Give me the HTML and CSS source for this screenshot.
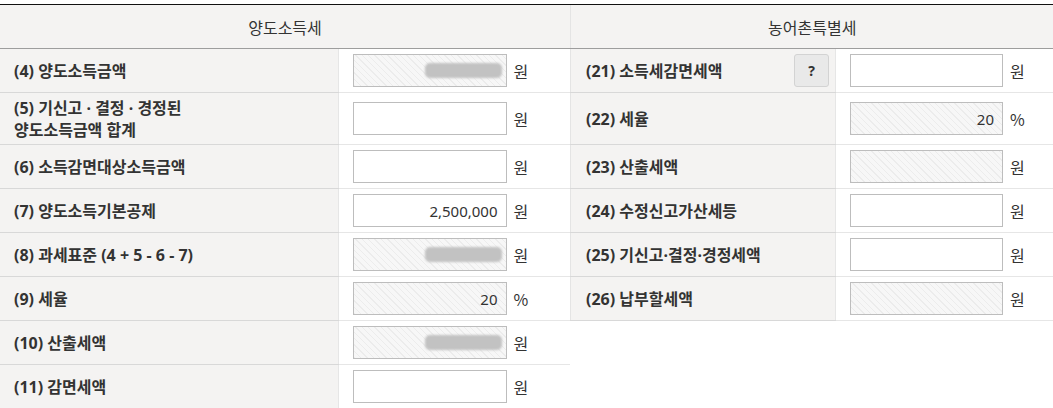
FILE: index.html
```html
<!DOCTYPE html>
<html lang="ko">
<head>
<meta charset="utf-8">
<title>양도소득세 / 농어촌특별세</title>
<link rel="stylesheet" href="styles.css">
</head>
<body>
<div class="sheet">
  <table class="tax tax-left">
    <colgroup><col class="c-label-l"><col class="c-input-l"></colgroup>
    <thead><tr><th colspan="2" class="head">양도소득세</th></tr></thead>
    <tbody>
      <tr><th class="lbl">(4) 양도소득금액</th><td class="inp"><div class="cell"><div class="field ro"><span class="mask"></span></div><span class="unit">원</span></div></td></tr>
      <tr class="tall"><th class="lbl">(5) 기신고 · 결정 · 경정된<br>양도소득금액 합계</th><td class="inp"><div class="cell"><div class="field"></div><span class="unit">원</span></div></td></tr>
      <tr><th class="lbl">(6) 소득감면대상소득금액</th><td class="inp"><div class="cell"><div class="field"></div><span class="unit">원</span></div></td></tr>
      <tr><th class="lbl">(7) 양도소득기본공제</th><td class="inp"><div class="cell"><div class="field">2,500,000</div><span class="unit">원</span></div></td></tr>
      <tr><th class="lbl">(8) 과세표준 (4 + 5 - 6 - 7)</th><td class="inp"><div class="cell"><div class="field ro"><span class="mask"></span></div><span class="unit">원</span></div></td></tr>
      <tr><th class="lbl">(9) 세율</th><td class="inp"><div class="cell"><div class="field ro">20</div><span class="unit">%</span></div></td></tr>
      <tr><th class="lbl">(10) 산출세액</th><td class="inp"><div class="cell"><div class="field ro"><span class="mask"></span></div><span class="unit">원</span></div></td></tr>
      <tr><th class="lbl">(11) 감면세액</th><td class="inp"><div class="cell"><div class="field"></div><span class="unit">원</span></div></td></tr>
    </tbody>
  </table>
  <table class="tax tax-right">
    <colgroup><col class="c-label-r"><col class="c-input-r"></colgroup>
    <thead><tr><th colspan="2" class="head">농어촌특별세</th></tr></thead>
    <tbody>
      <tr><th class="lbl lbl-btn"><div class="lbl-row"><span>(21) 소득세감면세액</span><span class="help">?</span></div></th><td class="inp"><div class="cell"><div class="field"></div><span class="unit">원</span></div></td></tr>
      <tr class="tall"><th class="lbl">(22) 세율</th><td class="inp"><div class="cell"><div class="field ro">20</div><span class="unit">%</span></div></td></tr>
      <tr><th class="lbl">(23) 산출세액</th><td class="inp"><div class="cell"><div class="field ro"></div><span class="unit">원</span></div></td></tr>
      <tr><th class="lbl">(24) 수정신고가산세등</th><td class="inp"><div class="cell"><div class="field"></div><span class="unit">원</span></div></td></tr>
      <tr><th class="lbl">(25) 기신고·결정·경정세액</th><td class="inp"><div class="cell"><div class="field"></div><span class="unit">원</span></div></td></tr>
      <tr><th class="lbl">(26) 납부할세액</th><td class="inp"><div class="cell"><div class="field ro"></div><span class="unit">원</span></div></td></tr>
    </tbody>
  </table>
</div>
</body>
</html>
```

FILE: styles.css
```css
html, body {
  margin: 0;
  padding: 0;
  background: #ffffff;
}
body {
  font-family: "Noto Sans", "Noto Sans CJK KR", sans-serif;
  color: #333333;
  font-size: 16px;
}
.sheet {
  margin-top: 4px;
  border-top: 1px solid #111111;
  display: flex;
  align-items: flex-start;
}
.tax {
  border-collapse: collapse;
  table-layout: fixed;
  border-spacing: 0;
}
.tax-left { width: 570px; }
.tax-right {
  width: 483px;
  border-left: 1px solid #e4e4e4;
}
.c-label-l { width: 338px; }
.c-input-l { width: 232px; }
.c-label-r { width: 265px; }
.c-input-r { width: 218px; }

.head {
  height: 43px;
  padding: 0;
  background: #f4f3f2;
  border-bottom: 1px solid #9d9d9d;
  font-weight: 400;
  font-size: 16px;
  text-align: center;
  line-height: 22px;
  font-family: "Noto Sans CJK KR", "Noto Sans", sans-serif;
}
.lbl {
  height: 43px;
  padding: 0 6px 0 14px;
  background: #f4f3f2;
  border-bottom: 1px solid #d8d8d8;
  border-right: 1px solid #e6e6e6;
  text-align: left;
  font-weight: 700;
  font-size: 16px;
  line-height: 22px;
  color: #333333;
  vertical-align: middle;
}
.tall .lbl, .tall .inp { height: 51px; }
.tax-right .lbl { padding-left: 15px; }
.lbl-row {
  display: flex;
  align-items: center;
  justify-content: space-between;
}
.help {
  width: 33px;
  height: 31px;
  border: 1px solid #d3d3d3;
  border-radius: 3px;
  background: #e9e9e9;
  display: flex;
  align-items: center;
  justify-content: center;
  font-size: 14px;
  font-weight: 700;
  color: #333333;
}
.inp {
  height: 43px;
  padding: 0 0 0 14px;
  border-bottom: 1px solid #e6e6e6;
  vertical-align: middle;
}
.cell {
  display: flex;
  align-items: center;
  gap: 7px;
}
.field {
  box-sizing: border-box;
  width: 154px;
  height: 33px;
  border: 1px solid #bdbdbd;
  background: #ffffff;
  display: flex;
  align-items: center;
  justify-content: flex-end;
  padding-right: 8px;
  font-size: 15px;
  color: #333333;
}
.tax-right .field { width: 153px; }
.field.ro {
  background: repeating-linear-gradient(45deg, #ececec 0 1px, #f7f7f7 1px 4.5px);
}
.mask {
  display: block;
  width: 77px;
  height: 15px;
  margin-right: -4px;
  border-radius: 5px;
  background: #c2c2c2;
  filter: blur(0.8px);
}
.unit {
  font-size: 16px;
  font-family: "Noto Sans CJK KR", "Noto Sans", sans-serif;
  color: #333333;
}
```
